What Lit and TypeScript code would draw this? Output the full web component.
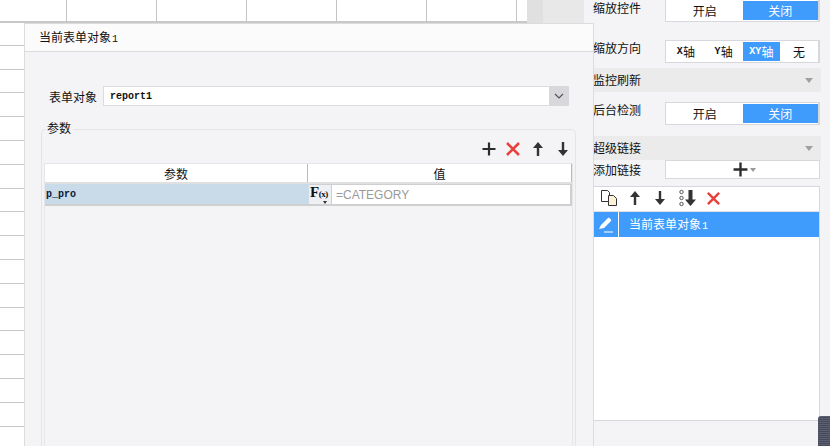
import { LitElement, html, css } from "lit";
import { customElement } from "lit/decorators.js";

const plus = (s = 14) => html`<svg width=${s} height=${s} viewBox="0 0 14 14"><path d="M7 0.500v13M0.500 7h13" stroke="#2c2c2c" stroke-width="2.200" fill="none"/></svg>`;
const cross = (s = 16) => html`<svg width=${s} height=${s} viewBox="0 0 16 16"><path d="M2 2l12 12M14 2L2 14" stroke="#e8413c" stroke-width="2.600" fill="none"/></svg>`;
const up = html`<svg width="12" height="16" viewBox="0 0 12 16"><path d="M6 1L11 7H7.200V15H4.800V7H1z" fill="#333"/></svg>`;
const down = html`<svg width="12" height="16" viewBox="0 0 12 16"><path d="M6 15L1 9H4.800V1H7.200V9H11z" fill="#333"/></svg>`;

@customElement("seg-ctl")
class SegCtl extends LitElement {
  static properties = { items: { type: Array }, active: { type: Number } };
  items: unknown[] = [];
  active = 0;
  static styles = css`
    :host { display: flex; width: 155px; height: 23px; box-sizing: border-box; border: 1px solid #d8d8dc; border-right-width: 2px; background: #fff; padding: 1px 0 1px 1px; }
    .s { flex: 1; display: flex; align-items: center; justify-content: center; font-size: 12px; color: #111; }
    .on { background: #409cfc; color: #fff; }
    .n { font-family: "Liberation Mono", monospace; font-size: 10px; font-weight: 700; }
  `;
  render() {
    return this.items.map((t, i) => {
      const text = String(t);
      const latin = text.match(/^[A-Z]+/);
      return html`<div class="s ${i === this.active ? "on" : ""}">${latin ? html`<span class="n">${latin[0]}</span>${text.slice(latin[0].length)}` : text}</div>`;
    });
  }
}

@customElement("app-root")
class AppRoot extends LitElement {
  static styles = css`
    :host { display: block; width: 830px; height: 446px; position: relative; overflow: hidden; background: #f4f4f6;
      font-family: "Noto Sans CJK SC", "Liberation Sans", sans-serif; font-size: 12px; color: #111; }
    .page { display: flex; height: 446px; }
    .canvas { width: 527px; height: 446px; background: #fff; flex: none; overflow: hidden; }
    .top { display: flex; height: 23px; margin-bottom: -1px; border-bottom: 2px solid #c8c8c8; box-sizing: border-box; }
    .top div { width: 90px; flex: none; box-sizing: border-box; border-right: 1px solid #c4c4c4; }
    .top div:first-child { width: 67px; }
    .top div:last-child { width: 10px; border: 0; }
    .r { height: 23.800px; box-sizing: border-box; border-bottom: 1px solid #c8c8c8; width: 24px; }
    .gutter { width: 57px; height: 23px; flex: none; display: flex; }
    .gutter i { display: block; height: 23px; }
    .g1 { width: 16px; background: #e0e0e0; }
    .g2 { width: 41px; background: #e8e8e8; }

    .panel { flex: 1; position: relative; display: flex; flex-direction: column; padding: 0 10px 0 9px; height: 446px; box-sizing: border-box; }
    .row { display: flex; justify-content: space-between; align-items: flex-start; }
    .row .lb { line-height: 15px; }
    .first { margin-top: -1px; height: 41px; }
    .first .lb { margin-top: 1px; }
    .second { height: 23px; }
    .third { margin-top: 10px; height: 34px; }
    .h1 { height: 24px; margin: 5px -1px 0 -9px; padding-left: 9px; display: flex; align-items: center; justify-content: space-between; background: #ebebeb; padding-right: 8px; }
    .h1 span { margin-top: -2px; }
    .h1.flush { margin-top: 0; }
    .addrow { align-items: center; }
    .tri { width: 0; height: 0; border: 4.500px solid transparent; border-top: 5px solid #a0a0a0; border-bottom: 0; }
    .add { width: 155px; height: 19px; box-sizing: border-box; border: 1px solid #d8d8dc; background: #fff; display: flex; align-items: center; justify-content: center; gap: 2px; padding-left: 3px; }
    .add .tri { border-width: 4px 3.500px 0; border-top-color: #999; }
    .list { margin-top: 7px; height: 235px; box-sizing: border-box; border: 1px solid #d8d8dc; background: #fff; }
    .ltools { height: 25px; display: flex; align-items: center; box-sizing: border-box; border-bottom: 1px solid #e0e0e0; padding: 0 0 2px 6px; }
    .ltools svg { display: block; flex: none; }
    .sp9 { width: 9px; } .sp11 { width: 11px; } .sp13 { width: 13px; }
    .sel { height: 25px; background: #409cfc; color: #fff; display: flex; align-items: center; }
    .sel .ic { width: 24px; height: 25px; border-right: 1px solid #fff; display: flex; align-items: center; justify-content: center; flex: none; }
    .sel span.t { margin: -3px 0 0 10px; }
    .n { font-family: "Liberation Mono", monospace; font-size: 10px; margin-left: 1px; }
    .grip { position: absolute; right: 0; top: 416px; width: 12px; height: 30px; background: repeating-linear-gradient(#5a5f70 0 1px, #474b5b 1px 2px); border-radius: 3px 0 0 0; }

    .dialog { position: absolute; left: 24px; top: 23px; width: 570px; height: 423px; box-sizing: border-box; border: solid #dcdcdc; border-width: 1px 1px 0; background: #f4f4f6; display: flex; flex-direction: column; }
    .title { height: 28px; flex: none; box-sizing: border-box; background: #fbfbfb; border-bottom: 1px solid #dcdcdc; padding: 0 0 2px 14px; display: flex; align-items: center; }
    .body { flex: 1; display: flex; flex-direction: column; padding: 34px 17px 0 16px; min-height: 0; }
    .form { display: flex; align-items: center; height: 20px; margin-left: 8px; margin-right: 7px; gap: 6px; }
    .sel-in { flex: 1; height: 20px; box-sizing: border-box; background: #fff; border: 1px solid #dcdcdf; display: flex; justify-content: space-between; align-items: center; padding-left: 6px; }
    .mono { font-family: "Liberation Mono", monospace; font-size: 10px; font-weight: 700; }
    .dd { width: 20px; height: 20px; margin: -1px; background: #d8d8dc; display: flex; align-items: center; justify-content: center; }
    .group { position: relative; margin-top: 23px; flex: 1; border: 1px solid #e4e4e8; border-bottom: 0; border-radius: 5px 5px 0 0; padding: 0 2px; display: flex; flex-direction: column; }
    .legend { position: absolute; left: 3px; top: -9px; background: #f4f4f6; padding: 0 2px; line-height: 14px; }
    .gtools { height: 33px; display: flex; align-items: center; justify-content: flex-end; padding: 4px 4px 0 0; box-sizing: border-box; flex: none; }
    .gtools > * { display: block; }
    .table { flex: 1; display: flex; flex-direction: column; border: solid #e6e6e9; border-width: 0 1px; }
    .thead { height: 21px; flex: none; box-sizing: border-box; background: #fff; border-top: 1px solid #e6e6e9; border-bottom: 2px solid #e0e0e0; display: flex; }
    .thead div { display: flex; align-items: center; justify-content: center; }
    .th1 { width: 263px; box-sizing: border-box; border-right: 1px solid #bbb; }
    .th2 { flex: 1; box-sizing: border-box; border-right: 1px solid #bbb; }
    .trow { height: 22px; flex: none; display: flex; box-sizing: border-box; border-bottom: 2px solid #cfcfcf; }
    .pname { width: 264px; background: #c9dbe9; padding: 0 0 0 1px; display: flex; align-items: center; box-sizing: border-box; color: #0a1a3a; }
    .fx { width: 22px; position: relative; background: #eef0f4; box-sizing: border-box; font-family: "Liberation Serif", serif; font-weight: 700; font-size: 15px; line-height: 14px; padding-left: 1px; border-top: 1px solid #d0d0d0; white-space: nowrap; letter-spacing: -0.500px; }
    .fx small { font-size: 9px; }
    .fx .tri { position: absolute; left: 14px; bottom: 0; border-width: 3px 2.500px 0; border-top-color: #333; }
    .val { flex: 1; box-sizing: border-box; background: #fff; border: 2px solid #cfcfcf; border-width: 1px 2px 0 1px; color: #9a9a9a; font-family: "Liberation Sans", sans-serif; padding-left: 4px; display: flex; align-items: center; }
  `;

  render() {
    return html`
      <div class="page">
        <div class="canvas">
          <div class="top">${[0, 1, 2, 3, 4, 5, 6].map(() => html`<div></div>`)}</div>
          ${Array.from({ length: 18 }).map(() => html`<div class="r"></div>`)}
        </div>
        <div class="gutter"><i class="g1"></i><i class="g2"></i></div>
        <div class="panel">
          <div class="row first"><span class="lb">缩放控件</span><seg-ctl .items=${["开启", "关闭"]} .active=${1}></seg-ctl></div>
          <div class="row second"><span class="lb">缩放方向</span><seg-ctl .items=${["X轴", "Y轴", "XY轴", "无"]} .active=${2}></seg-ctl></div>
          <div class="h1"><span>监控刷新</span><i class="tri"></i></div>
          <div class="row third"><span class="lb">后台检测</span><seg-ctl .items=${["开启", "关闭"]} .active=${1}></seg-ctl></div>
          <div class="h1 flush"><span>超级链接</span><i class="tri"></i></div>
          <div class="row addrow"><span>添加链接</span><div class="add">${plus(15)}<i class="tri"></i></div></div>
          <div class="list">
            <div class="ltools">
              <svg width="18" height="18" viewBox="0 0 18 18"><path d="M1.500 1.500h6l2 2v9h-8z" fill="#fff" stroke="#333"/><path d="M8.500 6.500h5l3 3v7h-8z" fill="#fdf2d8" stroke="#333"/></svg>
              <span class="sp11"></span>${up}<span class="sp13"></span>${down}<span class="sp13"></span>
              <svg width="18" height="18" viewBox="0 0 18 18"><circle cx="2.500" cy="3" r="1.700" fill="none" stroke="#555"/><circle cx="2.500" cy="9" r="1.700" fill="none" stroke="#555"/><circle cx="2.500" cy="15" r="1.700" fill="none" stroke="#555"/><path d="M11.500 17L6 10.500H9.500V1H13.500V10.500H17z" fill="#333"/></svg>
              <span class="sp9"></span>${cross(15)}
            </div>
            <div class="sel">
              <div class="ic"><svg width="16" height="16" viewBox="0 0 16 16"><path d="M1 12L3 8l7-7c1-1 4 2 3 3l-7 7z" fill="#fff"/><path d="M6 15h9" stroke="#fff" stroke-width="1"/></svg></div>
              <span class="t">当前表单对象<span class="n">1</span></span>
            </div>
          </div>
          <div class="grip"></div>
        </div>
      </div>
      <div class="dialog">
        <div class="title"><span>当前表单对象<span class="n">1</span></span></div>
        <div class="body">
          <div class="form"><span>表单对象</span>
            <div class="sel-in"><span class="mono">report1</span>
              <div class="dd"><svg width="10" height="6" viewBox="0 0 10 6"><path d="M1 1l4 4 4-4" fill="none" stroke="#555" stroke-width="1.200"/></svg></div>
            </div>
          </div>
          <div class="group">
            <span class="legend">参数</span>
            <div class="gtools">${plus(14)}<span class="sp9"></span>${cross(16)}<span class="sp11"></span>${up}<span class="sp13"></span>${down}</div>
            <div class="table">
              <div class="thead"><div class="th1">参数</div><div class="th2">值</div></div>
              <div class="trow">
                <div class="pname mono">p_pro</div>
                <div class="fx">F<small>(x)</small><i class="tri"></i></div>
                <div class="val">=CATEGORY</div>
              </div>
            </div>
          </div>
        </div>
      </div>
    `;
  }
}
